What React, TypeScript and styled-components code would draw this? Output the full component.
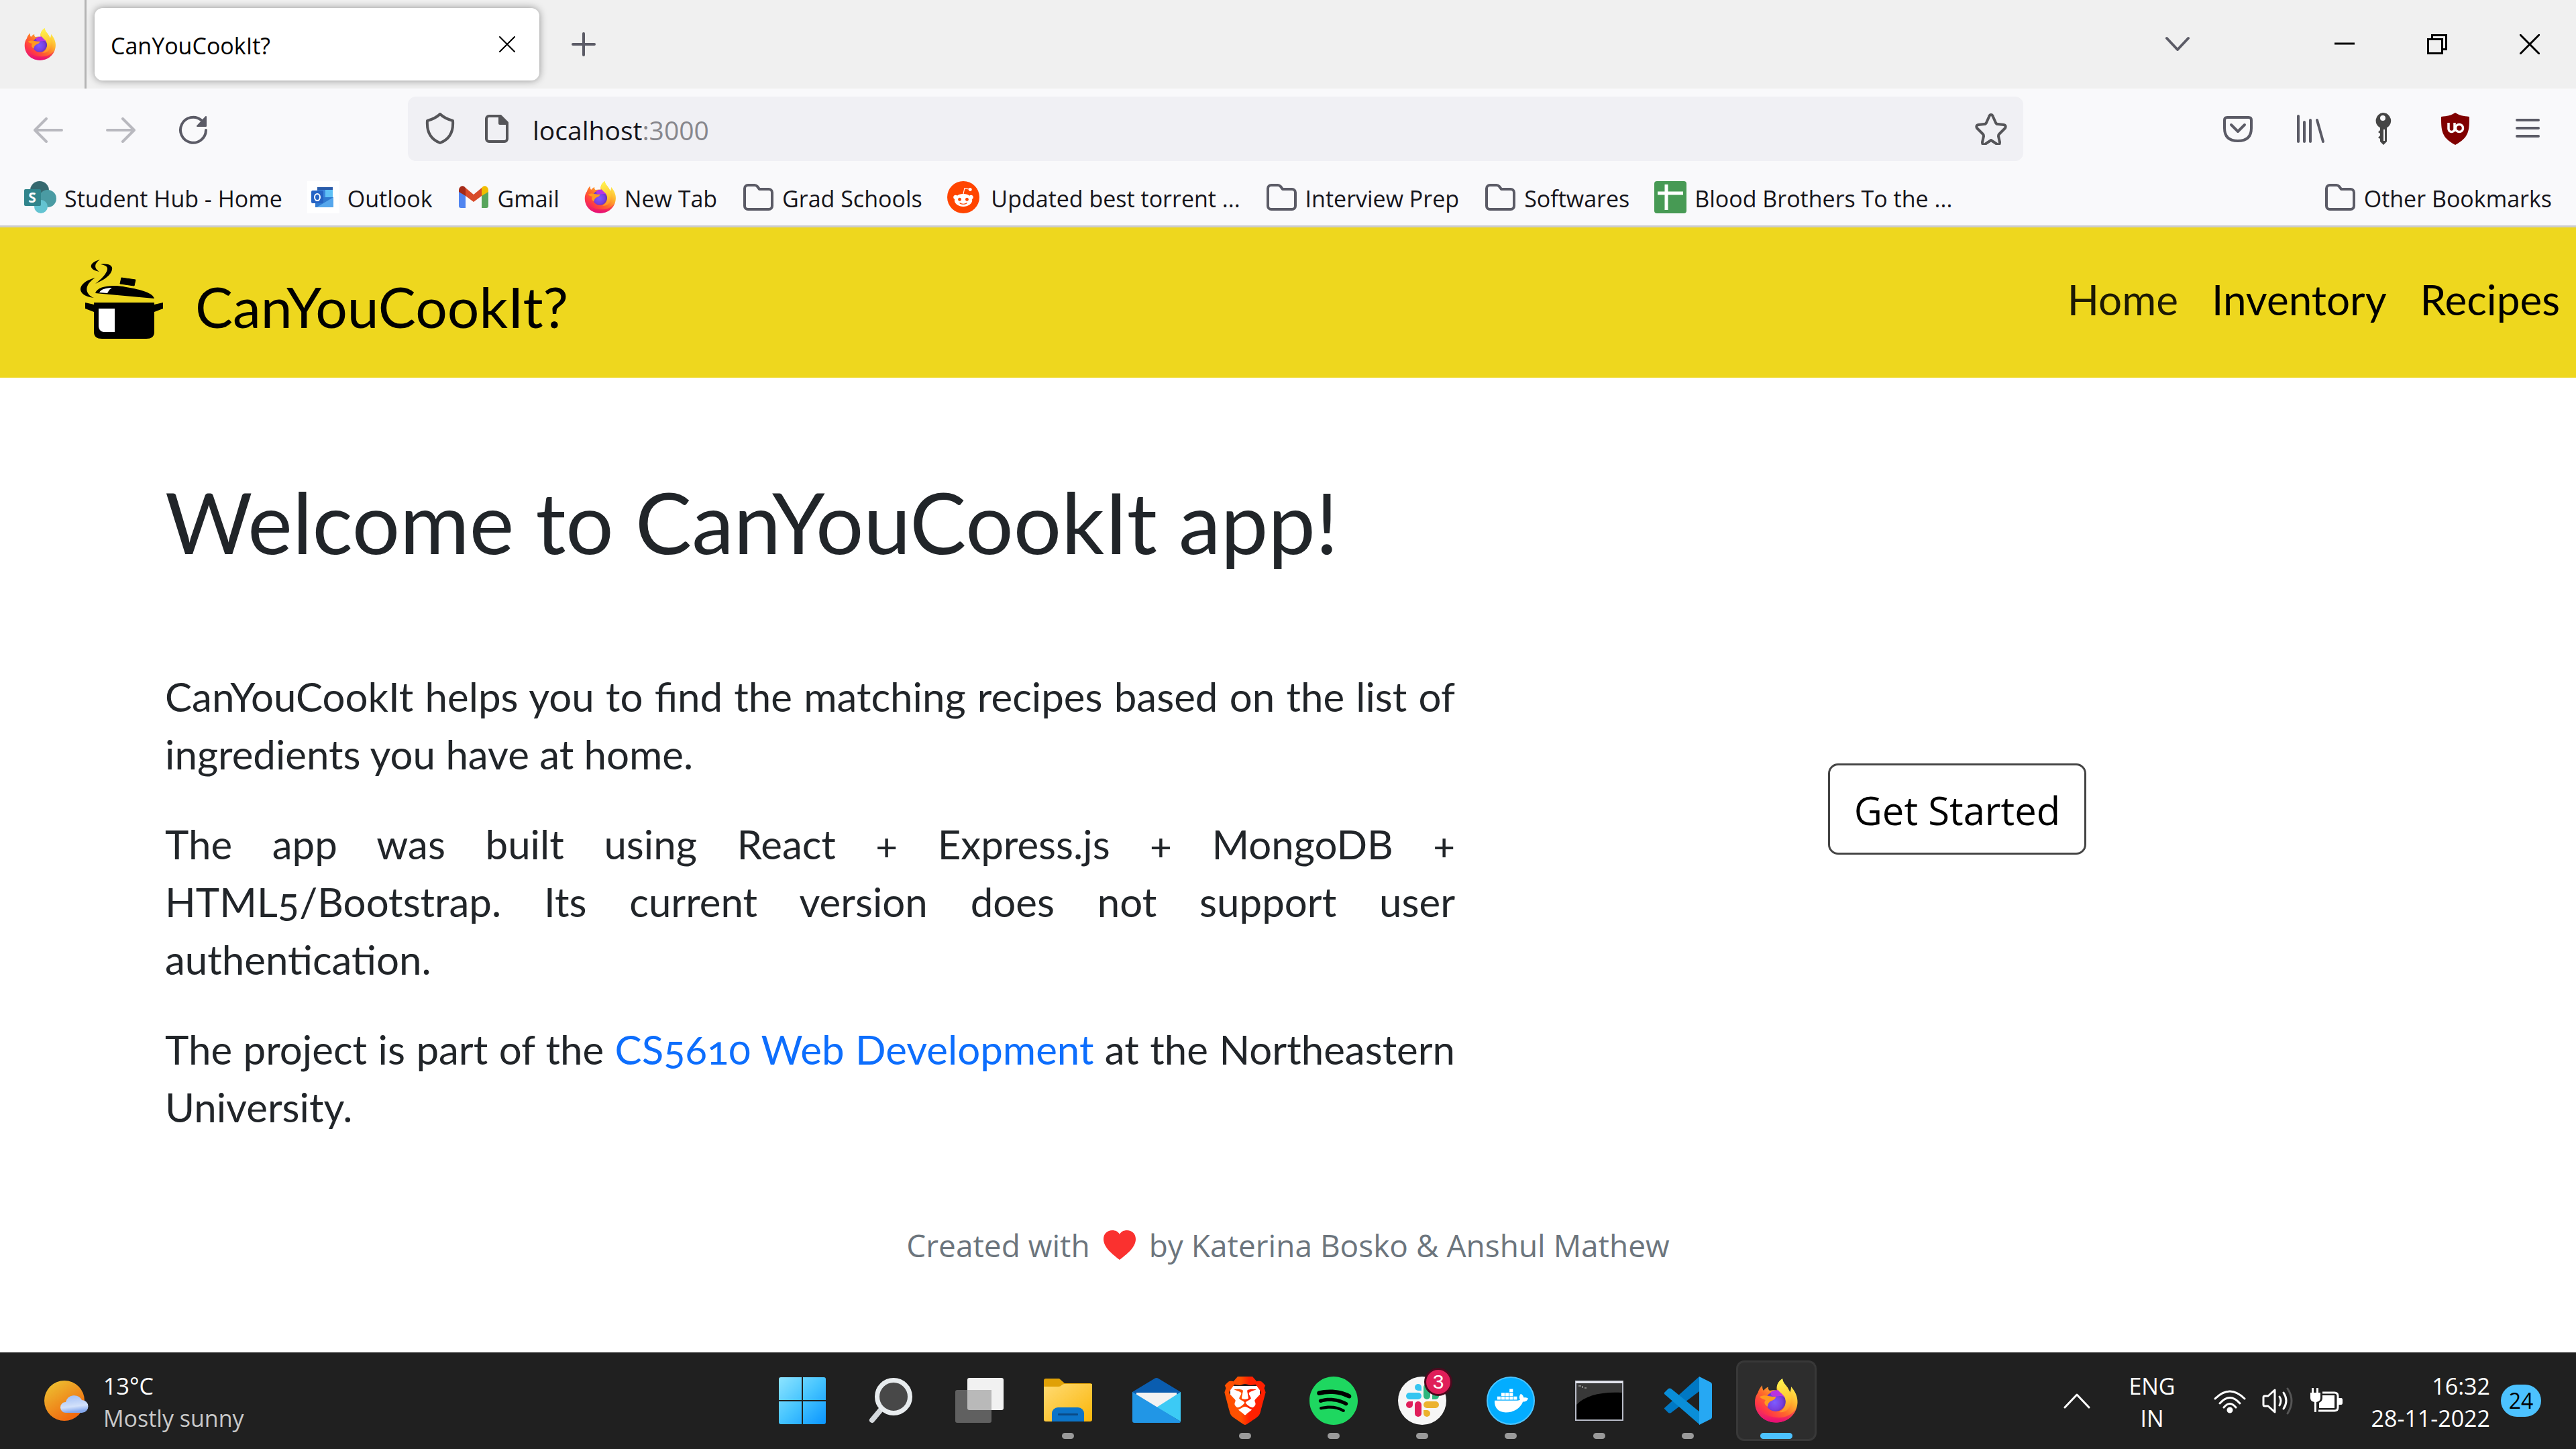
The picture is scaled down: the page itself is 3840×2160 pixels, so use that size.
import React from "react";
import styled, { createGlobalStyle, css } from "styled-components";
import { SiSpotify, SiBrave } from "react-icons/si";
import { FaDocker, FaRedditAlien } from "react-icons/fa";

const ui = `"Open Sans", "Noto Sans", sans-serif`;
const display = `Lato, "Open Sans", sans-serif`;

const GlobalStyle = createGlobalStyle`
  *, *::before, *::after { box-sizing: border-box; }
  body { margin: 0; background: #fff; font-family: ${ui}; }
  h1, p { margin: 0; }
  a { text-decoration: none; color: inherit; }
  button { font: inherit; color: inherit; border: 0; background: none; padding: 0; }
  svg { display: block; flex: none; }
`;

const Screen = styled.div`
  min-height: 100vh;
  display: flex;
  flex-direction: column;
`;

/* ---------- browser chrome ---------- */

const TabStrip = styled.div`
  display: flex;
  align-items: stretch;
  height: 132px;
  background: #f0f0f0;
`;

const PinnedTab = styled.div`
  width: 129px;
  padding-left: 36px;
  display: flex;
  align-items: center;
  border-right: 3px solid #b4b4b4;
`;

const Tab = styled.div`
  width: 663px;
  margin: 12px;
  padding: 0 36px 0 24px;
  display: flex;
  align-items: center;
  justify-content: space-between;
  background: #fff;
  border-radius: 12px;
  box-shadow: 0 0 12px rgba(0, 0, 0, 0.4);
  font-size: 34px;
  line-height: 48px;
  color: #000;
`;

const Label = styled.span`
  padding-top: 4px;
`;

const StripButton = styled.button<{ $width: number }>`
  width: ${(p) => p.$width}px;
  display: flex;
  align-items: center;
  justify-content: center;
`;

const WindowControls = styled.div`
  display: flex;
  margin-left: auto;
`;

const ListTabs = styled(StripButton)`
  margin-right: 126px;
`;

const Toolbar = styled.div`
  display: flex;
  align-items: center;
  padding: 12px 18px;
  background: #f9f9fb;
  color: #5b5b66;
`;

const ToolButton = styled.button<{ $dim?: boolean }>`
  width: 108px;
  height: 96px;
  display: flex;
  align-items: center;
  justify-content: center;
  opacity: ${(p) => (p.$dim ? 0.4 : 1)};
`;

const UrlBar = styled.div`
  flex: 1;
  height: 96px;
  margin: 0 266px;
  padding: 0 24px;
  display: flex;
  align-items: center;
  background: #f0f0f4;
  border-radius: 12px;
  font-size: 39px;
  line-height: 60px;
  color: #555559;
`;

const UrlIcons = styled.div`
  display: flex;
  gap: 36px;
  margin-right: 30px;
`;

const HostInput = styled.input`
  field-sizing: content;
  border: 0;
  padding: 4px 0 0;
  background: none;
  outline: none;
  font: inherit;
  color: #15141a;
`;

const Port = styled(Label)`
  flex: 1;
  color: #86868c;
`;

const BookmarkBar = styled.nav`
  display: flex;
  align-items: center;
  gap: 37px;
  height: 87px;
  padding: 0 36px;
  background: #f9f9fb;
  border-bottom: 3px solid #ccc;
  font-size: 34px;
  line-height: 48px;
  color: #15141a;
`;

const BookmarkLink = styled.a<{ $last?: boolean }>`
  display: flex;
  align-items: center;
  gap: 12px;
  white-space: nowrap;
  ${(p) =>
    p.$last &&
    css`
      margin-left: auto;
    `}
`;

/* ---------- web page ---------- */

const Site = styled.div`
  flex: 1;
  background: #fff;
  color: #212529;
`;

const SiteHeader = styled.header`
  display: flex;
  align-items: center;
  justify-content: space-between;
  height: 224px;
  padding: 0 24px 10px 120px;
  background: #eed71e;
  color: #000;
`;

const Brand = styled.a`
  display: flex;
  align-items: center;
  gap: 48px;
  font-family: ${display};
  font-size: 84px;
  line-height: 96px;
`;

const BrandName = styled.span`
  padding-top: 22px;
`;

const SiteNav = styled.nav`
  display: flex;
  gap: 50px;
  font-family: ${display};
  font-size: 62px;
  line-height: 96px;
`;

const NavLink = styled.a<{ $active?: boolean }>`
  color: ${(p) => (p.$active ? "#1c1904" : "#000")};
`;

const Hero = styled.main`
  display: grid;
  grid-template-columns: 7fr 5fr;
  align-items: center;
  margin: 103px 210px 0;
`;

const Copy = styled.div`
  padding: 40px 36px 4px;
  font-family: ${display};
  font-weight: 400;
`;

const Title = styled.h1`
  font-size: 126px;
  line-height: 144px;
  font-weight: 400;
  margin-bottom: 145px;
`;

const Paragraph = styled.p`
  font-size: 60px;
  line-height: 86px;
  margin-bottom: 48px;
  text-align: justify;
  font-variant-numeric: oldstyle-nums;
`;

const TextLink = styled.a`
  color: #0d6efd;
`;

const Action = styled.div`
  display: flex;
  justify-content: center;
`;

const StartButton = styled.button`
  height: 136px;
  padding: 4px 36px 0;
  border: 3px solid #444;
  border-radius: 15px;
  font-size: 58px;
  line-height: 84px;
  color: #000;
`;

const Credits = styled.footer`
  display: flex;
  align-items: center;
  justify-content: center;
  gap: 20px;
  margin-top: 75px;
  font-size: 46px;
  line-height: 72px;
  color: #6c757d;
`;

/* ---------- desktop taskbar ---------- */

const Taskbar = styled.div`
  display: grid;
  grid-template-columns: 1fr auto 1fr;
  align-items: center;
  height: 144px;
  padding-left: 4px;
  background: #202020;
  color: #fff;
  font-size: 34px;
  line-height: 48px;
`;

const Weather = styled.button`
  display: flex;
  align-items: center;
  gap: 22px;
  padding-left: 62px;
  text-align: left;
`;

const Stack = styled.div<{ $align?: string }>`
  padding-top: 4px;
  text-align: ${(p) => p.$align || "left"};
`;

const Muted = styled.div`
  color: #c8c8c8;
`;

const Apps = styled.div`
  display: flex;
  gap: 12px;
`;

const AppButton = styled.button<{ $active?: boolean }>`
  position: relative;
  width: 120px;
  height: 120px;
  display: flex;
  align-items: center;
  justify-content: center;
  border-radius: 12px;
  border: 3px solid ${(p) => (p.$active ? "#383838" : "transparent")};
  background: ${(p) => (p.$active ? "#2d2d2d" : "transparent")};
`;

const Indicator = styled.span<{ $active?: boolean }>`
  position: absolute;
  bottom: 0;
  left: 50%;
  transform: translateX(-50%);
  width: ${(p) => (p.$active ? 48 : 18)}px;
  height: 9px;
  border-radius: 5px;
  background: ${(p) => (p.$active ? "#4cc2ff" : "#9a9a9a")};
`;

const Badge = styled.span`
  position: absolute;
  top: 8px;
  right: 12px;
  width: 42px;
  height: 42px;
  border-radius: 50%;
  border: 3px solid #4a0a1e;
  background: #e01e5a;
  font-family: "Liberation Sans", sans-serif;
  font-size: 30px;
  line-height: 36px;
  text-align: center;
`;

const Tray = styled.div`
  display: flex;
  align-items: center;
  justify-content: flex-end;
  padding-right: 52px;
`;

const TrayButton = styled.button`
  display: flex;
  align-items: center;
  gap: 24px;
  text-align: center;
`;

const Language = styled(TrayButton)`
  margin: 0 57px;
`;

const Clock = styled(TrayButton)`
  gap: 16px;
  margin-left: 43px;
`;

const Count = styled.span`
  width: 60px;
  height: 48px;
  border-radius: 24px;
  background: #4cc2ff;
  color: #000;
  font-size: 32px;
  line-height: 48px;
`;

/* ---------- drawings ---------- */

const Line = ({ d, w = 48, h = 48, sw = 4, color = "currentColor", fill = "none", square = false }: { d: string; w?: number; h?: number; sw?: number; color?: string; fill?: string; square?: boolean }) => (
  <svg width={w} height={h} viewBox={`0 0 ${w} ${h}`} fill={fill} stroke={color} strokeWidth={sw} strokeLinecap={square ? "butt" : "round"} strokeLinejoin={square ? "miter" : "round"} aria-hidden="true">
    <path d={d} />
  </svg>
);

const FirefoxLogo = ({ size = 48, id }: { size?: number; id: string }) => (
  <svg width={size} height={size} viewBox="-1 0 66 66" aria-hidden="true">
    <defs>
      <linearGradient id={`${id}a`} x1="0.85" y1="0.1" x2="0.15" y2="0.95">
        <stop offset="0" stopColor="#fff44f" />
        <stop offset="0.3" stopColor="#ffb02e" />
        <stop offset="0.55" stopColor="#ff6a2b" />
        <stop offset="0.8" stopColor="#ff3647" />
        <stop offset="1" stopColor="#e31587" />
      </linearGradient>
      <radialGradient id={`${id}b`} cx="0.45" cy="0.55" r="0.6">
        <stop offset="0" stopColor="#7b5cff" />
        <stop offset="0.6" stopColor="#7a3fe0" />
        <stop offset="1" stopColor="#5a2da8" />
      </radialGradient>
      <linearGradient id={`${id}c`} x1="0.5" y1="0" x2="0.6" y2="1">
        <stop offset="0" stopColor="#fff44f" />
        <stop offset="0.6" stopColor="#ffc832" />
        <stop offset="1" stopColor="#ff8a2a" />
      </linearGradient>
      <linearGradient id={`${id}d`} x1="0" y1="0" x2="0" y2="1">
        <stop offset="0" stopColor="#ff4a38" stopOpacity="0" />
        <stop offset="1" stopColor="#e5097c" />
      </linearGradient>
    </defs>
    <path fill={`url(#${id}a)`} d="M11 10C11 14 11.500 16 13 18C15 15 17.500 13.500 20 12.500C19.500 15 20 16.500 22 18C27 17 30 17 33 18C31 11 35 4 41 0C42 7 46 9 49 14C50.500 18 51 19 52 21C53.500 18 54 15 54 12C60 19 64 27 63.500 36C62.500 53 49 65.500 31.500 65.500C14 65.500 .5 53 0 36C-.2 30 1.500 25 4.500 21C5.500 17 8 13 11 10Z" />
    <path fill={`url(#${id}d)`} d="M0 36C1 54 15 65.500 31.500 65.500C47 65.500 59 56 62.500 43C56 54 45 59 33 58C16 57 4 49 0 36Z" />
    <circle cx="31" cy="34" r="15" fill={`url(#${id}b)`} />
    <path fill="#b833e1" d="M24 20C29 16 40 16 44 22C46 25 46 27 45 29C41 25 37 26 31 27C26 27 22 24 24 20Z" />
    <path fill="#ff9a1f" d="M7 27C12 25 16 25 20 26C24 27 28 27 31 27C31 31 27 32 23 34C20 36 19 39 19 42C14 39 13 35 16 32C13 31 9 30 7 27Z" />
    <path fill={`url(#${id}c)`} d="M41 0C42 7 46 9 49 14C56 24 57 38 49 46C45 50 40 51 36 50C46 45 48 35 44 27C40 21 32 18 33 11C34 6 37 3 41 0Z" />
  </svg>
);

const FolderIcon = () => (
  <Line color="#5b5b66" d="M4 11a5 5 0 0 1 5-5h10c2 0 3 1 4 2l3 4h14a5 5 0 0 1 5 5v20a5 5 0 0 1-5 5H9a5 5 0 0 1-5-5z" />
);

const SharePointIcon = () => (
  <svg width="48" height="48" viewBox="0 0 48 48" aria-hidden="true">
    <circle cx="23" cy="14" r="14" fill="#36696f" />
    <circle cx="35" cy="26" r="13" fill="#4a9ba3" />
    <circle cx="25" cy="38" r="10" fill="#63c3d1" />
    <rect y="12" width="25" height="25" rx="2" fill="#31858c" />
    <text x="12" y="32" fontFamily="Open Sans" fontWeight="700" fontSize="21" textAnchor="middle" fill="#fff">S</text>
  </svg>
);

const OutlookIcon = () => (
  <svg width="48" height="48" viewBox="0 0 48 48" aria-hidden="true">
    <rect width="48" height="48" fill="#fff" />
    <path fill="#2a5caa" d="M15 9h23v6H15z" />
    <path fill="#3b86dd" d="M15 13h12v13H15z" />
    <path fill="#5fc1f6" d="M27 13h11v13H27z" />
    <path fill="#2e79d0" d="M12 24h27v15H12z" />
    <path fill="#56a7ec" d="M39 24v15H14z" />
    <rect x="6" y="14" width="18" height="19" rx="2" fill="#2563c4" />
    <ellipse cx="15" cy="24" rx="4" ry="5" fill="none" stroke="#fff" strokeWidth="2" />
  </svg>
);

const GmailIcon = () => (
  <svg width="48" height="48" viewBox="0 0 48 48" aria-hidden="true">
    <path fill="#5085f0" d="M2 14l10 7v19H5a3 3 0 0 1-3-3z" />
    <path fill="#58a55c" d="M36 21l10-7v23a3 3 0 0 1-3 3h-7z" />
    <path fill="#d84b2a" d="M12 10l12 10 12-10v12L24 31 12 22z" />
    <path fill="#a52a18" d="M2 14c0-6 5-8 8-6l2 2v12L2 16z" />
    <path fill="#f1bd00" d="M46 14c0-6-5-8-8-6l-2 2v12l10-6z" />
  </svg>
);

const RedditIcon = () => (
  <svg width="48" height="48" viewBox="0 0 48 48" aria-hidden="true">
    <circle cx="24" cy="24" r="24" fill="#ff4500" />
    <FaRedditAlien x="8" y="8" width="32" height="32" size={32} color="#fff" />
  </svg>
);

const SheetIcon = () => (
  <svg width="48" height="48" viewBox="0 0 48 48" aria-hidden="true">
    <rect width="48" height="48" rx="4" fill="#479a54" />
    <path d="M18 5v38M5 18h38" stroke="#fff" strokeWidth="5" />
  </svg>
);

const PotLogo = () => (
  <svg width="123" height="118" viewBox="0 0 123 118" aria-hidden="true">
    <path d="M29 0C11 5 12 15 28 18C20 13 20 6 29 0Z" />
    <path d="M30 7C44 5 50 10 46 18C42 27 30 32 22 36C31 29 38 22 40 15C41 10 36 8 30 7Z" />
    <path d="M22 27C-6 34-8 54 20 57C6 51 5 38 22 27Z" />
    <path d="M61 27l21 3-2 9-21-3z" stroke="#000" strokeWidth="1" strokeLinejoin="round" />
    <path d="M22 50C26 39 48 37 68 41C92 45 108 50 110 58Z" />
    <path fill="#fff" d="M28 49C31 44 38 42 47 42C43 44 42 47 40 50Z" />
    <path d="M20 64h90v3l13-3v9l-13 5v30q0 10-12 10H32q-12 0-12-10V78L7 73v-9l13 3z" />
    <path fill="#fff" d="M27 73h24v35H34q-7-2-7-9z" />
  </svg>
);

const ShieldIcon = () => <Line d="M24 2c6 6 12 8 19 10c1 14-3 27-19 33C8 39 4 26 5 12c7-2 13-4 19-10z" />;
const PageIcon = () => (
  <svg width="48" height="48" viewBox="0 0 48 48" fill="none" stroke="currentColor" strokeWidth="4" strokeLinejoin="round" aria-hidden="true">
    <path d="M13 5h17l10 10v24a4 4 0 0 1-4 4H13a4 4 0 0 1-4-4V9a4 4 0 0 1 4-4z" />
    <path d="M29 5v11h11z" fill="currentColor" />
  </svg>
);

const ReloadIcon = () => (
  <svg width="48" height="48" viewBox="0 0 48 48" fill="none" stroke="currentColor" strokeWidth="4" strokeLinecap="round" aria-hidden="true">
    <path d="M43 26A19 19 0 1 1 36 11" />
    <path d="M43 6v14H30z" fill="currentColor" strokeWidth="2" strokeLinejoin="round" />
  </svg>
);

const KeyIcon = () => (
  <svg width="48" height="48" viewBox="0 0 48 48" aria-hidden="true">
    <path fill="#454545" fillRule="evenodd" d="M24 0a12 12 0 0 1 6 22.500V43l-5 5-5-5v-4l-3-2 3-3v-3l-3-2 3-3v-3.500A12 12 0 0 1 24 0zm0 4a4 4 0 1 0 0 8 4 4 0 0 0 0-8zm1 21v17h2V25z" />
  </svg>
);

const UblockIcon = () => (
  <svg width="48" height="48" viewBox="0 0 48 48" aria-hidden="true">
    <path fill="#800000" d="M24 0c6 4 12 5 21 6c0 20 0 31-21 42C3 37 3 26 3 6C12 5 18 4 24 0z" />
    <path d="M14 15v9a4 4 0 0 0 9 0v-9M23 24v4" fill="none" stroke="#fff" strokeWidth="3.500" />
    <circle cx="30" cy="23" r="5.500" fill="none" stroke="#fff" strokeWidth="3.500" />
  </svg>
);

const SunIcon = () => (
  <svg width="66" height="60" viewBox="0 0 66 60" aria-hidden="true">
    <defs>
      <linearGradient id="sun" x1="0.2" y1="0.1" x2="0.7" y2="0.9">
        <stop offset="0" stopColor="#edb92e" />
        <stop offset="1" stopColor="#f0690f" />
      </linearGradient>
      <linearGradient id="cloud" x1="0" y1="0" x2="0.2" y2="1">
        <stop offset="0" stopColor="#9dbcf5" />
        <stop offset="0.7" stopColor="#d3e1fa" />
        <stop offset="1" stopColor="#86a9ee" />
      </linearGradient>
    </defs>
    <circle cx="30" cy="30" r="30" fill="url(#sun)" />
    <path fill="url(#cloud)" d="M32 48a8 8 0 0 1 0-16a13 13 0 0 1 24-3a9.500 9.500 0 0 1 0 19z" />
  </svg>
);

const WindowsIcon = () => (
  <svg width="70" height="70" viewBox="0 0 70 70" aria-hidden="true">
    <defs>
      <linearGradient id="win" x1="0" y1="0" x2="1" y2="1">
        <stop offset="0" stopColor="#8ee4ff" />
        <stop offset="0.5" stopColor="#45c4ff" />
        <stop offset="1" stopColor="#0a95ff" />
      </linearGradient>
    </defs>
    <path fill="url(#win)" d="M3 0h31v34H0V3a3 3 0 0 1 3-3zM36 0h31a3 3 0 0 1 3 3v31H36zM0 36h34v34H3a3 3 0 0 1-3-3zM36 36h34v31a3 3 0 0 1-3 3H36z" />
  </svg>
);

const SearchIcon = () => (
  <svg width="66" height="70" viewBox="0 0 66 70" aria-hidden="true">
    <path d="M5 64L20 46" stroke="#d5d9dc" strokeWidth="8" strokeLinecap="round" />
    <circle cx="37" cy="29" r="24.500" fill="#484848" stroke="#e8ecee" strokeWidth="7" />
  </svg>
);

const TaskViewIcon = () => (
  <svg width="72" height="68" viewBox="0 0 72 68" aria-hidden="true">
    <rect x="18" width="54" height="48" rx="3" fill="#f1f1f1" />
    <rect y="18" width="54" height="49" rx="3" fill="#606060" />
    <path d="M18 18h36v30H21a3 3 0 0 1-3-3z" fill="#b9b9b9" />
  </svg>
);

const ExplorerIcon = () => (
  <svg width="72" height="66" viewBox="0 0 72 66" aria-hidden="true">
    <defs>
      <linearGradient id="fold" x1="0" y1="0" x2="1" y2="1">
        <stop offset="0" stopColor="#ffdb73" />
        <stop offset="1" stopColor="#fab60a" />
      </linearGradient>
    </defs>
    <path fill="#e0a106" d="M3 0h20l8 7h38a3 3 0 0 1 3 3v20H0V3a3 3 0 0 1 3-3z" />
    <path fill="url(#fold)" d="M0 12h22c4 0 5-4 9-4h41v53a3 3 0 0 1-3 3H3a3 3 0 0 1-3-3z" />
    <path fill="#0c74c8" d="M12 64V52a9 9 0 0 1 9-9h30a9 9 0 0 1 9 9v12z" />
    <rect x="21" y="52" width="30" height="3" rx="1" fill="#0a4a86" />
  </svg>
);

const MailIcon = () => (
  <svg width="72" height="68" viewBox="0 0 72 68" aria-hidden="true">
    <path fill="#0a5db0" d="M0 21L33 1q3-2 6 0l33 20v14H0z" />
    <path fill="#f2f2f2" d="M6 22h60v14L36 52 6 36z" />
    <path fill="#3ccaf5" d="M72 21v44L36 44z" />
    <path fill="#2196e6" d="M0 21l72 44q0 2-3 2H3q-3 0-3-3z" />
  </svg>
);

const SlackIcon = () => (
  <svg width="72" height="72" viewBox="0 0 72 72" aria-hidden="true">
    <circle cx="36" cy="36" r="36" fill="#f6f6f6" />
    <g fill="#36c5f0"><rect x="12" y="24" width="23" height="10" rx="5" /><path d="M35 21h-5a5 5 0 1 1 5-5z" /></g>
    <g fill="#2eb67d"><rect x="38" y="11" width="10" height="23" rx="5" /><path d="M51 34v-5a5 5 0 1 1 5 5z" /></g>
    <g fill="#ecb22e"><rect x="38" y="37" width="23" height="10" rx="5" /><path d="M38 50h5a5 5 0 1 1-5 5z" /></g>
    <g fill="#e01e5a"><rect x="25" y="37" width="10" height="23" rx="5" /><path d="M22 37v5a5 5 0 1 1-5-5z" /></g>
  </svg>
);

const SpotifyIcon = () => (
  <svg width="72" height="72" viewBox="0 0 72 72" aria-hidden="true">
    <circle cx="36" cy="36" r="34" fill="#000" />
    <SiSpotify width="72" height="72" size={72} color="#1ed760" />
  </svg>
);

const BraveIcon = () => (
  <svg width="72" height="72" viewBox="0 0 72 72" aria-hidden="true">
    <defs>
      <linearGradient id="brave" x1="0" y1="0" x2="1" y2="0">
        <stop offset="0.4" stopColor="#ff5000" />
        <stop offset="0.6" stopColor="#ff2000" />
      </linearGradient>
    </defs>
    <path fill="#fff" d="M14 14h44v34L36 64 14 48z" />
    <SiBrave width="72" height="72" size={72} fill="url(#brave)" />
  </svg>
);

const DockerIcon = () => (
  <svg width="72" height="72" viewBox="0 0 72 72" aria-hidden="true">
    <circle cx="36" cy="36" r="35" fill="#03adff" stroke="#4cc4ff" strokeWidth="2" />
    <FaDocker x="12" y="11" width="50" height="50" size={50} color="#fff" />
  </svg>
);

const TerminalIcon = () => (
  <svg width="72" height="60" viewBox="0 0 72 60" aria-hidden="true">
    <rect x="1" y="1" width="70" height="58" fill="#000" stroke="#b9bcc8" strokeWidth="2" />
    <path d="M2 4h68v14C40 16 15 22 2 36z" fill="#383838" />
    <path d="M1 2.500h70" stroke="#e3e5ee" strokeWidth="3" />
    <path d="M5 8h4M11 8v3M14 11h3" stroke="#ccc" strokeWidth="1" />
  </svg>
);

const CodeIcon = () => (
  <svg width="72" height="72" viewBox="0 0 72 72" aria-hidden="true">
    <path fill="#0078c4" d="M1 48l6 6q2 1 4 0L53 22V0L1 47z" />
    <path fill="#0a8ed8" d="M1 24l6-6q2-1 4 0L54 53v19L1 26z" />
    <path fill="#26a8f3" d="M53 0l16 8q3 1 3 4v48q0 3-3 4l-16 8z" />
  </svg>
);

const SpeakerIcon = () => (
  <svg width="48" height="48" viewBox="0 0 48 48" fill="none" stroke="#fff" strokeWidth="3" strokeLinecap="round" strokeLinejoin="round" aria-hidden="true">
    <path d="M2 19q0-2 2-2h5l10-9v33l-10-9H4q-2 0-2-2z" />
    <path d="M26 18q4 6 0 13M32 12q8 12 0 24" />
    <path d="M38 6q12 18 0 37" stroke="#555" />
  </svg>
);

const WifiIcon = () => (
  <svg width="48" height="48" viewBox="0 0 48 48" fill="none" stroke="#fff" strokeWidth="3" strokeLinecap="round" aria-hidden="true">
    <path d="M2 21Q24-1 46 21M9 28Q24 11 39 28M15 34q9-11 18 0" />
    <circle cx="24" cy="38" r="3" fill="#fff" />
  </svg>
);

const BatteryIcon = () => (
  <svg width="48" height="48" viewBox="0 0 48 48" aria-hidden="true">
    <path d="M18 12h18q5 0 5 5v17q0 5-5 5H12" fill="none" stroke="#fff" strokeWidth="3" />
    <path fill="#fff" d="M42 20h4q2 0 2 3v4q0 3-2 3h-4zM18 16h18v19H13v-8q5-2 5-7zM0 12h15v8q0 5-6 6v15H6V26q-6-1-6-6zM2 5h3v8H2zM9 5h3v8H9z" />
  </svg>
);

/* ---------- content ---------- */

const bookmarks = [
  { label: "Student Hub - Home", icon: <SharePointIcon /> },
  { label: "Outlook", icon: <OutlookIcon /> },
  { label: "Gmail", icon: <GmailIcon /> },
  { label: "New Tab", icon: <FirefoxLogo id="bm" /> },
  { label: "Grad Schools", icon: <FolderIcon /> },
  { label: "\u2009Updated best torrent ...", icon: <RedditIcon /> },
  { label: "Interview Prep", icon: <FolderIcon /> },
  { label: "Softwares", icon: <FolderIcon /> },
  { label: "Blood Brothers To the ...", icon: <SheetIcon /> },
];

const apps = [
  { name: "Start", icon: <WindowsIcon /> },
  { name: "Search", icon: <SearchIcon /> },
  { name: "Task view", icon: <TaskViewIcon /> },
  { name: "File Explorer", icon: <ExplorerIcon />, running: true },
  { name: "Mail", icon: <MailIcon /> },
  { name: "Brave", icon: <BraveIcon />, running: true },
  { name: "Spotify", icon: <SpotifyIcon />, running: true },
  { name: "Slack", icon: <SlackIcon />, running: true, badge: 3 },
  { name: "Docker", icon: <DockerIcon />, running: true },
  { name: "Terminal", icon: <TerminalIcon />, running: true },
  { name: "Code", icon: <CodeIcon />, running: true },
  { name: "Firefox", icon: <FirefoxLogo id="tb" size={66} />, running: true, active: true },
];

export default function App() {
  return (
    <Screen>
      <GlobalStyle />
      <TabStrip>
        <PinnedTab><FirefoxLogo id="pin" /></PinnedTab>
        <Tab>
          <Label>CanYouCookIt?</Label>
          <button aria-label="Close tab"><Line w={24} h={24} sw={2} color="#000" d="M1 1l22 22M23 1L1 23" /></button>
        </Tab>
        <StripButton $width={108} aria-label="New tab"><Line w={36} h={36} color="#5b5b66" sw={4} d="M18 2v32M2 18h32" /></StripButton>
        <WindowControls>
          <ListTabs $width={108} aria-label="List all tabs"><Line w={36} h={24} sw={4} color="#5b5b66" d="M2 3l16 17L34 3" /></ListTabs>
          <StripButton $width={138} aria-label="Minimize"><Line w={30} h={30} sw={3} square color="#000" d="M0 14h30" /></StripButton>
          <StripButton $width={138} aria-label="Restore"><Line w={30} h={30} sw={3} square color="#000" d="M1.500 7.500h21v21h-21zM7.500 7.500v-6h21v21h-6" /></StripButton>
          <StripButton $width={138} aria-label="Close"><Line w={30} h={30} sw={3} square color="#000" d="M0 0l30 30M30 0L0 30" /></StripButton>
        </WindowControls>
      </TabStrip>

      <Toolbar>
        <ToolButton $dim aria-label="Back"><Line d="M44 26H5M21 9L4 26l17 17" /></ToolButton>
        <ToolButton $dim aria-label="Forward"><Line d="M4 26h39M27 9l17 17-17 17" /></ToolButton>
        <ToolButton aria-label="Reload"><ReloadIcon /></ToolButton>
        <UrlBar>
          <UrlIcons><ShieldIcon /><PageIcon /></UrlIcons>
          <HostInput aria-label="Address" defaultValue="localhost" />
          <Port>:3000</Port>
          <button aria-label="Bookmark this page">
            <Line d="M24 3q2 0 3 3l4 9q1 2 3 2l9 1q4 1 2 5l-9 9q-1 1-1 3l2 9q0 5-4 3l-9-6-9 6q-4 2-4-3l2-9q0-2-1-3l-9-9q-2-4 2-5l9-1q2 0 3-2l4-9q1-3 3-3z" />
          </button>
        </UrlBar>
        <ToolButton aria-label="Pocket"><Line d="M8 7h32q4 0 4 4v12q0 19-20 19T4 23V11q0-4 4-4zM14 18l10 10 10-10" /></ToolButton>
        <ToolButton aria-label="Library"><Line d="M6 5v38M15 14v29M24 11v32M34 11l9 32" /></ToolButton>
        <ToolButton aria-label="Passwords"><KeyIcon /></ToolButton>
        <ToolButton aria-label="Ad blocker"><UblockIcon /></ToolButton>
        <ToolButton aria-label="Menu"><Line d="M8 11h32M8 23h32M8 35h32" /></ToolButton>
      </Toolbar>

      <BookmarkBar aria-label="Bookmarks">
        {bookmarks.map((b) => (
          <BookmarkLink href="#" key={b.label}>{b.icon}<Label>{b.label}</Label></BookmarkLink>
        ))}
        <BookmarkLink href="#" $last><FolderIcon /><Label>Other Bookmarks</Label></BookmarkLink>
      </BookmarkBar>

      <Site>
        <SiteHeader>
          <Brand href="#"><PotLogo /><BrandName>CanYouCookIt?</BrandName></Brand>
          <SiteNav>
            <NavLink href="#" $active>Home</NavLink>
            <NavLink href="#">Inventory</NavLink>
            <NavLink href="#">Recipes</NavLink>
          </SiteNav>
        </SiteHeader>
        <Hero>
          <Copy>
            <Title>Welcome to CanYouCookIt app!</Title>
            <Paragraph>
              CanYouCookIt helps you to find the matching recipes based on the list of ingredients you have at home.
            </Paragraph>
            <Paragraph>
              The app was built using React + Express.js + MongoDB + HTML5/Bootstrap. Its current version does not support user authentication.
            </Paragraph>
            <Paragraph>
              The project is part of the <TextLink href="#">CS5610 Web Development</TextLink> at the Northeastern University.
            </Paragraph>
          </Copy>
          <Action><StartButton>Get Started</StartButton></Action>
        </Hero>
        <Credits>
          <span>Created with</span>
          <svg width="48" height="44" viewBox="0 0 48 44" role="img" aria-label="love">
            <path fill="#fa312f" d="M24 44C14 36 0 26 0 13C0 5 6 0 13 0c5 0 9 2 11 6c2-4 6-6 11-6c7 0 13 5 13 13c0 13-14 23-24 31z" />
          </svg>
          <span>by Katerina Bosko &amp; Anshul Mathew</span>
        </Credits>
      </Site>

      <Taskbar>
        <Weather>
          <SunIcon />
          <Stack>
            <div>13°C</div>
            <Muted>Mostly sunny</Muted>
          </Stack>
        </Weather>
        <Apps>
          {apps.map((a) => (
            <AppButton key={a.name} aria-label={a.name} $active={a.active}>
              {a.icon}
              {a.badge && <Badge>{a.badge}</Badge>}
              {a.running && <Indicator $active={a.active} />}
            </AppButton>
          ))}
        </Apps>
        <Tray>
          <TrayButton aria-label="Show hidden icons"><Line w={40} h={24} sw={3} color="#fff" d="M2 22L20 3l18 19" /></TrayButton>
          <Language><Stack $align="center"><div>ENG</div><div>IN</div></Stack></Language>
          <TrayButton aria-label="Network, volume and battery"><WifiIcon /><SpeakerIcon /><BatteryIcon /></TrayButton>
          <Clock>
            <Stack $align="right"><div>16:32</div><div>28-11-2022</div></Stack>
            <Count>24</Count>
          </Clock>
        </Tray>
      </Taskbar>
    </Screen>
  );
}
